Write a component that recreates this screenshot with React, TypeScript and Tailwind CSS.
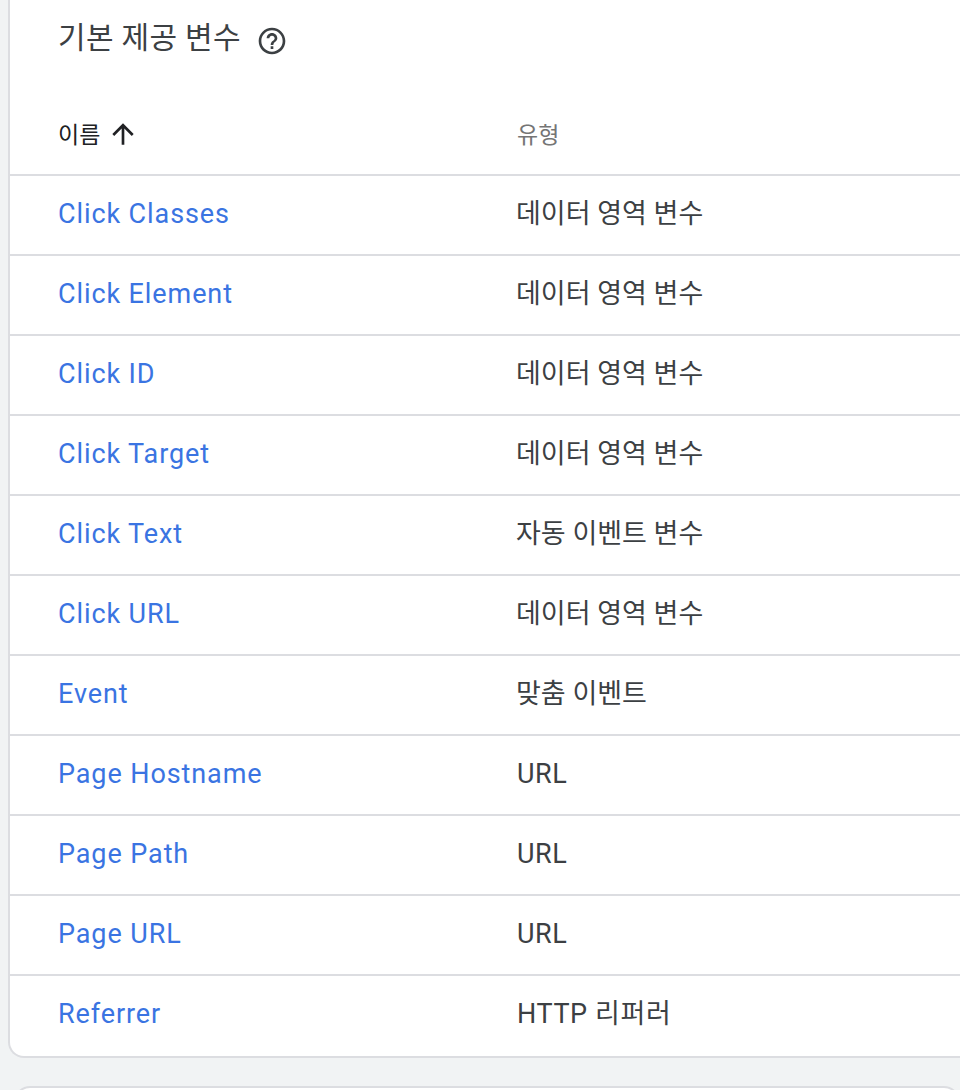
const rows = [
  ['Click Classes', '데이터 영역 변수'],
  ['Click Element', '데이터 영역 변수'],
  ['Click ID', '데이터 영역 변수'],
  ['Click Target', '데이터 영역 변수'],
  ['Click Text', '자동 이벤트 변수'],
  ['Click URL', '데이터 영역 변수'],
  ['Event', '맞춤 이벤트'],
  ['Page Hostname', 'URL'],
  ['Page Path', 'URL'],
  ['Page URL', 'URL'],
  ['Referrer', 'HTTP 리퍼러'],
];

const font = { fontFamily: 'Roboto, "Noto Sans CJK KR", sans-serif' };

export default function App() {
  return (
    <div className="h-[1090px] overflow-hidden bg-[#f1f3f4] pl-[8px]" style={font}>
      {/* Card */}
      <div className="h-[1058px] bg-white border-l-2 border-b-2 border-[#dcdde1] rounded-bl-[16px]">
        <div className="flex items-center h-[78px] pl-[48px]">
          <h2 className="text-[30px] tracking-[0.3px] text-[#3c4043] font-normal leading-none mb-[2px]">기본 제공 변수</h2>
          <svg className="w-[32px] h-[32px] ml-[15px] mt-[4px]" viewBox="0 0 24 24" fill="#3c4043">
            <path d="M11 18h2v-2h-2v2zm1-16C6.48 2 2 6.48 2 12s4.48 10 10 10 10-4.48 10-10S17.52 2 12 2zm0 18c-4.41 0-8-3.59-8-8s3.59-8 8-8 8 3.59 8 8-3.59 8-8 8zm0-14c-2.21 0-4 1.79-4 4h2c0-1.1.9-2 2-2s2 .9 2 2c0 2-3 1.75-3 5h2c0-2.25 3-2.5 3-5 0-2.21-1.79-4-4-4z" />
          </svg>
        </div>
        <div className="flex items-center h-[98px] border-b-2 border-[#dcdde1] pl-[48px] pt-[20px]">
          <div className="flex items-center w-[459px] text-[23px] text-[#202124]">
            이름
            <svg className="w-[32px] h-[32px] ml-[7px] mb-[4px]" viewBox="0 0 24 24" fill="#202124">
              <path d="M4 12l1.41 1.41L11 7.83V20h2V7.83l5.58 5.59L20 12l-8-8-8 8z" />
            </svg>
          </div>
          <div className="text-[23px] text-[#757575]">유형</div>
        </div>
        {rows.map(([name, type], i) => (
          <div key={name} className={`flex items-center h-[80px] pl-[48px] pb-[2px] border-b-2 ${i < rows.length - 1 ? 'border-[#dcdde1]' : 'border-transparent'}`}>
            <div className="w-[459px] text-[27px] tracking-[0.9px] text-[#3a74e2]">{name}</div>
            <div className={`text-[27px] text-[#3c4043] ${/[A-Z]/.test(type) ? 'tracking-[0.6px]' : '-ml-[1px]'}`}>{type}</div>
          </div>
        ))}
      </div>
      <div className="mt-[28px] h-[20px] bg-white border-2 border-[#dcdde1] rounded-t-[16px] ml-[6px]" />
    </div>
  );
}
